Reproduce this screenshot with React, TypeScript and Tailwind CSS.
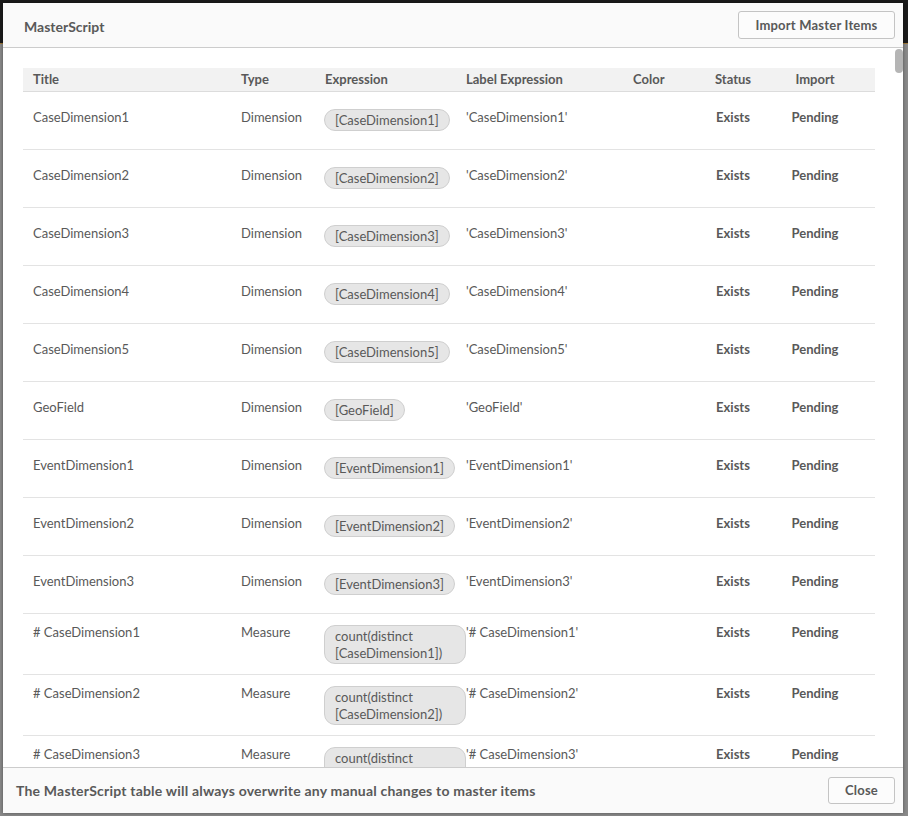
import React from 'react';

type Item = {
    title: string;
    type: 'Dimension' | 'Measure';
    expr: string;
    label: string;
};

const dims = [
    'CaseDimension1',
    'CaseDimension2',
    'CaseDimension3',
    'CaseDimension4',
    'CaseDimension5',
    'GeoField',
    'EventDimension1',
    'EventDimension2',
    'EventDimension3',
];

const items: Item[] = [
    ...dims.map(d => ({title: d, type: 'Dimension' as const, expr: `[${d}]`, label: `'${d}'`})),
    ...['CaseDimension1', 'CaseDimension2', 'CaseDimension3'].map(d => ({
        title: `# ${d}`,
        type: 'Measure' as const,
        expr: `count(distinct [${d}])`,
        label: `'# ${d}'`,
    })),
];

const cols = 'grid grid-cols-[208px_84px_141px_167px_80px_60px_112px]';

function Row({item}: { item: Item }) {
    const measure = item.type === 'Measure';
    const textPad = measure ? 'pt-[10px]' : 'pt-[17px]';
    return (
        <div className={`${cols} border-b border-[#e3e3e3] ${measure ? 'h-[61px]' : 'h-[58px]'} leading-[17px]`}>
            <div className={`pl-[10px] ${textPad}`}>{item.title}</div>
            <div className={`pl-[10px] ${textPad}`}>{item.type}</div>
            <div className={`pl-[9px] ${measure ? 'pt-[11px]' : 'pt-[17px]'}`}>
                <div className={`${measure ? 'w-[142px]' : 'inline-block'} max-w-[142px] rounded-[11px] border border-[#cfcfcf] bg-[#e6e6e6] px-[10px] py-[1.5px] leading-[17px]`}>
                    {item.expr}
                </div>
            </div>
            <div className={`pl-[10px] ${textPad}`}>{item.label}</div>
            <div className={textPad}></div>
            <div className={`text-center font-bold ${textPad}`}>Exists</div>
            <div className={`pr-2 text-center font-bold ${textPad}`}>Pending</div>
        </div>
    );
}

export default function App() {
    return (
        <div
            className="relative h-[816px] w-[908px] overflow-hidden bg-[#8a8a8a] text-[13px] text-[#595959]"
            style={{fontFamily: 'Lato, "Open Sans", sans-serif'}}
        >
            {/* dimmed app toolbar behind the dialog */}
            <div className="absolute left-0 top-0 h-[43px] w-full bg-[#1b1b1b]"/>
            <div className="absolute left-0 top-[43px] h-[1px] w-full bg-[#a07a3a]"/>

            <div className="absolute left-[3px] top-[3px] flex h-[810px] w-[900px] flex-col overflow-hidden bg-white shadow-[0_0_4px_rgba(0,0,0,0.4)]">
                {/* header */}
                <div className="flex h-[45px] shrink-0 items-center justify-between border-b border-[#cccccc] bg-[#fafafa] pl-[21px] pr-[8px]">
                    <h1 className="pt-[3px] text-[14px] font-bold">MasterScript</h1>
                    <button className="h-[28px] w-[157px] rounded-[3px] border border-[#c4c4c4] bg-[#fcfcfc] pt-[1px] font-bold tracking-[0.2px]">
                        Import Master Items
                    </button>
                </div>

                {/* body */}
                <div className="flex min-h-0 flex-1">
                    <div className="min-w-0 flex-1 overflow-hidden px-5 pt-5">
                        <div className="w-[852px]">
                            <div className={`${cols} h-[24px] items-center border-b border-[#dcdcdc] bg-[#f2f2f2] font-bold`}>
                                <div className="pl-[10px]">Title</div>
                                <div className="pl-[10px]">Type</div>
                                <div className="pl-[10px]">Expression</div>
                                <div className="pl-[10px]">Label Expression</div>
                                <div className="pl-[10px]">Color</div>
                                <div className="text-center">Status</div>
                                <div className="pr-2 text-center">Import</div>
                            </div>
                            {items.map(it => (
                                <Row key={it.title} item={it}/>
                            ))}
                        </div>
                    </div>
                    <div className="w-[8px] shrink-0 pt-[1px]">
                        <div className="h-[24px] w-[8px] rounded-[4px] bg-[#b5b5b5]"/>
                    </div>
                </div>

                {/* footer */}
                <div className="flex h-[46px] shrink-0 items-center justify-between border-t border-[#cccccc] bg-[#fafafa] pl-[13px] pr-[8px]">
                    <p className="text-[14px] font-bold tracking-[0.2px]">The MasterScript table will always overwrite any manual changes to master items</p>
                    <button className="h-[27px] w-[67px] rounded-[3px] border border-[#c4c4c4] bg-[#fcfcfc] font-bold tracking-[0.2px]">
                        Close
                    </button>
                </div>
            </div>
        </div>
    );
}
